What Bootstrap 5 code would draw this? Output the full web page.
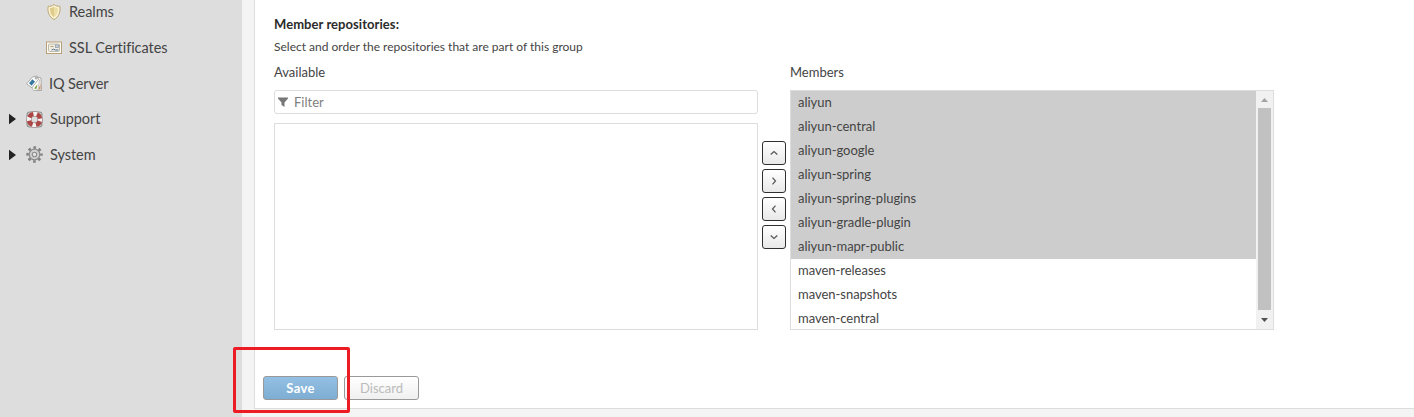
<!DOCTYPE html>
<html lang="en">
<head>
<meta charset="utf-8">
<title>Repository group</title>
<link href="https://cdn.jsdelivr.net/npm/bootstrap@5.3.0/dist/css/bootstrap.min.css" rel="stylesheet">
<style>
body{width:1414px;height:417px;overflow:hidden;background:#f4f4f4;color:#444;font:13px/18px Lato,"Open Sans",sans-serif;font-variant-ligatures:none}
.side{width:242px;height:417px;background:#ddd;font-size:14.5px}
.side-in{margin-top:-6px}
.node{height:35.75px;line-height:20px}
.node svg{flex:none}
.arrow{width:7px;height:12px;margin:0 10px 0 9px}
.lvl1{padding-left:26px}
.lvl2{padding-left:46px}
.lbl{margin-left:7px;white-space:nowrap}
.lvl2 .lbl{letter-spacing:-.05px}
.lvl1 .lbl{letter-spacing:-.1px;padding-top:1px}
.arrow ~ .lbl{letter-spacing:-.05px}
.panel{margin-left:12px;height:409px;width:1160px;background:#fff;border-left:1px solid #ddd;border-bottom:1px solid #ddd;padding:15px 0 0 19px}
.field{width:484px}
.ttl{letter-spacing:.06px;color:#2b2b2b}
.hint{font-size:12px;margin-top:5px}
.cap{margin:7px 0 9px}
.filter{height:24px;border:1px solid #ddd;border-radius:3px;color:#808080;padding-left:3px}
.filter span{margin-left:6px}
.avail{height:207px;border:1px solid #ddd;margin-top:9px}
.members{height:240px;border:1px solid #ddd;overflow:hidden}
.item{height:24px;line-height:23px;padding-left:7px;white-space:nowrap;letter-spacing:-.03px}
.item.on{background:#cdcdcd}
.sbar{width:17px;background:#f1f1f1}
.thumb{width:13px;height:202px;background:#c1c1c1}
.movers{width:32px;padding:85px 4px 0;gap:4px}
.mv{width:24px;height:24px;border:1px solid #2f2f2f;border-radius:3px;background:linear-gradient(#fff,#e8e8e8);padding:0}
.act{width:75px;height:24px;border-radius:3px;border:1px solid #999;padding:0;font-size:13px;line-height:21px}
.save{background:linear-gradient(#93c0e3,#7eadd3);color:#fff;font-weight:700;letter-spacing:.3px}
.disc{background:linear-gradient(#fff,#f0f0f0);color:#bbb}
.acts{margin:46px 0 0 -11px;gap:6px}
.callout{left:233px;top:347px;width:117px;height:66px;border:3px solid #ed1c24;border-radius:2px}
</style>
</head>
<body class="position-relative">
<div class="d-flex">
<nav class="side flex-shrink-0"><div class="side-in">
  <div class="node lvl2 d-flex align-items-center">
    <svg width="16" height="16" viewBox="0 0 16 16"><path d="M8 .6C6 2 4 2.500 2.200 2.200 1.200 7.500 3 13 8 15.500c5-2.500 6.800-8 5.800-13.300C12 2.500 10 2 8 .6z" fill="#fbf3d6" stroke="#bda571"/><path d="M8 2.800C6.700 3.600 5.300 4 4 4c-.2 4 .8 7.300 4 9.300z" fill="#e0cb8a"/><path d="M8 2.800C9.300 3.600 10.700 4 12 4c.2 4-.8 7.300-4 9.300z" fill="#ecdfa6"/></svg>
    <span class="lbl">Realms</span></div>
  <div class="node lvl2 d-flex align-items-center">
    <svg width="16" height="16" viewBox="0 0 16 16"><rect x=".5" y="2" width="15" height="11.500" fill="#fffdf5" stroke="#b99f77"/><rect x="2.500" y="4" width="11" height="7.500" rx="1" fill="#f1eee0" stroke="#bcbaac"/><path d="M4.500 6.500h3" stroke="#a9a37f"/><rect x="9.500" y="5" width="3" height="2.500" fill="#ccd3dc" stroke="#8994a3" stroke-width=".7"/><path d="M5.500 10l2-.8 2 .8h3" fill="none" stroke="#4a6c9e"/></svg>
    <span class="lbl">SSL Certificates</span></div>
  <div class="node lvl1 d-flex align-items-center">
    <svg width="16" height="16" viewBox="0 0 16 16"><path d="M9.500 1.500L15 3l.5 12.500H8z" fill="#f8f6f2" stroke="#999" stroke-width=".8"/><path d="M12.500 14.500l2-6v6z" fill="#c98a58"/><path d="M6 12.500l5.500-9 2 1.500-1.500 10-4.500.5z" fill="#fff" stroke="#aaa" stroke-width=".7"/><path d="M8 13.500l3.500-4.500-1 5z" fill="#7ea23e"/><path d="M.6 8.800L6.500 2l4.500-1 1.300 3.500L6 12.800z" fill="#fff" stroke="#999" stroke-width=".8"/><path d="M3 8.300l3.300-4L9 6.500l-3.300 4.300z" fill="#37789f"/><circle cx="10" cy="3.200" r="1" fill="#ccc" stroke="#888" stroke-width=".5"/></svg>
    <span class="lbl">IQ Server</span></div>
  <div class="node d-flex align-items-center">
    <svg class="arrow" viewBox="0 0 7 12"><path d="M0 .8L7 6 0 11.200z" fill="#222"/></svg>
    <svg width="17" height="17" viewBox="0 0 16 16"><rect x="1" y="1" width="14" height="14" rx="2.500" fill="none" stroke="#8f8f8f"/><circle cx="8" cy="8" r="5.300" fill="none" stroke="#8d7777" stroke-width="5"/><circle cx="8" cy="8" r="5.300" fill="none" stroke="#f4f1f0" stroke-width="4"/><circle cx="8" cy="8" r="5.300" fill="none" stroke="#ad4545" stroke-width="4" stroke-dasharray="4.900 3.425" stroke-dashoffset="-1.710"/></svg>
    <span class="lbl">Support</span></div>
  <div class="node d-flex align-items-center">
    <svg class="arrow" viewBox="0 0 7 12"><path d="M0 .8L7 6 0 11.200z" fill="#222"/></svg>
    <svg width="17" height="17" viewBox="0 0 16 16"><circle cx="8" cy="8" r="6.500" fill="none" stroke="#808080" stroke-width="2.400" stroke-dasharray="2.500 2.605" stroke-dashoffset="1.250"/><circle cx="8" cy="8" r="5" fill="#d2d2d2" stroke="#8c8c8c" stroke-width="1.200"/><circle cx="8" cy="8" r="2.100" fill="#e4e4e4" stroke="#8c8c8c" stroke-width="1.100"/></svg>
    <span class="lbl">System</span></div>
</div></nav>
<main class="panel flex-shrink-0">
  <div class="ttl fw-bold">Member repositories:</div>
  <div class="hint">Select and order the repositories that are part of this group</div>
  <div class="d-flex">
    <div class="field">
      <div class="cap">Available</div>
      <div class="filter d-flex align-items-center"><svg width="10" height="10" viewBox="0 0 10 10"><path d="M0 .5h10v1L6.500 5.500V10l-3-2V5.500L0 1.500z" fill="#777"/></svg><span>Filter</span></div>
      <div class="avail"></div>
    </div>
    <div class="movers d-flex flex-column">
      <button class="mv btn d-flex align-items-center justify-content-center"><svg width="8" height="8" viewBox="0 0 8 8"><path d="M.7 5.500L4 2.500l3.300 3" fill="none" stroke="#555" stroke-width="1.200"/></svg></button>
      <button class="mv btn d-flex align-items-center justify-content-center"><svg width="8" height="8" viewBox="0 0 8 8"><path d="M2.500.7l3 3.300-3 3.300" fill="none" stroke="#555" stroke-width="1.200"/></svg></button>
      <button class="mv btn d-flex align-items-center justify-content-center"><svg width="8" height="8" viewBox="0 0 8 8"><path d="M5.500.7l-3 3.300 3 3.300" fill="none" stroke="#555" stroke-width="1.200"/></svg></button>
      <button class="mv btn d-flex align-items-center justify-content-center"><svg width="8" height="8" viewBox="0 0 8 8"><path d="M.7 2.500l3.300 3 3.300-3" fill="none" stroke="#555" stroke-width="1.200"/></svg></button>
    </div>
    <div class="field">
      <div class="cap">Members</div>
      <div class="members d-flex">
        <div class="flex-grow-1">
          <div class="item on">aliyun</div><div class="item on">aliyun-central</div><div class="item on">aliyun-google</div><div class="item on">aliyun-spring</div><div class="item on">aliyun-spring-plugins</div><div class="item on">aliyun-gradle-plugin</div><div class="item on">aliyun-mapr-public</div>
          <div class="item">maven-releases</div><div class="item">maven-snapshots</div><div class="item">maven-central</div>
        </div>
        <div class="sbar d-flex flex-column align-items-center">
          <svg width="17" height="17" viewBox="0 0 17 17"><path d="M5 11l3.500-4 3.500 4z" fill="#a3a3a3"/></svg>
          <div class="thumb"></div>
          <svg width="17" height="17" viewBox="0 0 17 17"><path d="M5 8l3.500 4L12 8z" fill="#505050"/></svg>
        </div>
      </div>
    </div>
  </div>
  <div class="acts d-flex"><button class="act btn save">Save</button><button class="act btn disc">Discard</button></div>
</main>
</div>
<div class="callout position-absolute"></div>
</body>
</html>
